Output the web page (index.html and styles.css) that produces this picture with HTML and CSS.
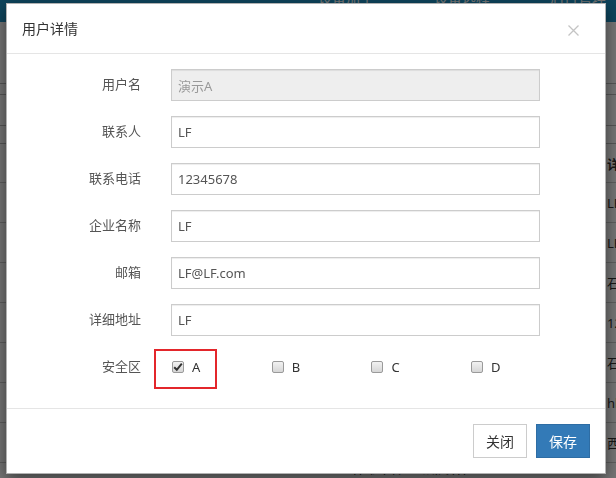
FILE: index.html
```html
<!DOCTYPE html>
<html lang="zh-CN">
<head>
<meta charset="utf-8">
<title>用户详情</title>
<link rel="stylesheet" href="styles.css">
</head>
<body>
<div class="page">
  <div class="nav">
    <span class="nav-item">设备加工</span>
    <span class="nav-item">设备远程</span>
    <span class="nav-item">后台管理</span>
  </div>
  <div class="band b1"></div>
  <div class="band b2"></div>
  <div class="band b3"></div>
  <div class="band b4"></div>
  <div class="trow head"><span></span><span>详细地址</span></div>
  <div class="trow"><span></span><span>LF</span></div>
  <div class="trow"><span></span><span>LF</span></div>
  <div class="trow"><span></span><span>石家庄</span></div>
  <div class="trow"><span></span><span>123</span></div>
  <div class="trow"><span></span><span>石家庄</span></div>
  <div class="trow"><span></span><span>hh</span></div>
  <div class="trow"><span></span><span>西安</span></div>
  <div class="trow foot"><span class="foottext">技术支持：联发科技</span><span></span></div>
</div>

<div class="backdrop"></div>

<div class="modal">
  <div class="modal-header">
    <h4 class="modal-title">用户详情</h4>
    <span class="close">
      <svg width="11" height="11" viewBox="0 0 11 11"><path d="M0.5 0.5 L10.5 10.5 M10.5 0.5 L0.5 10.5" stroke="#c4c4c4" stroke-width="1.3" fill="none"/></svg>
    </span>
  </div>
  <div class="modal-body">
    <div class="group">
      <label class="lbl">用户名</label>
      <div class="field disabled">演示A</div>
    </div>
    <div class="group">
      <label class="lbl">联系人</label>
      <div class="field">LF</div>
    </div>
    <div class="group">
      <label class="lbl">联系电话</label>
      <div class="field">12345678</div>
    </div>
    <div class="group">
      <label class="lbl">企业名称</label>
      <div class="field">LF</div>
    </div>
    <div class="group">
      <label class="lbl">邮箱</label>
      <div class="field">LF@LF.com</div>
    </div>
    <div class="group">
      <label class="lbl">详细地址</label>
      <div class="field">LF</div>
    </div>
    <div class="group">
      <label class="lbl">安全区</label>
      <div class="options">
        <div class="opt hl">
          <span class="cb checked"><svg width="10" height="10" viewBox="0 0 10 10"><path d="M1.2 5.2 L3.8 7.8 L8.8 1.6" stroke="#333" stroke-width="2" fill="none"/></svg></span>
          <span class="opt-text">A</span>
        </div>
        <div class="opt"><span class="cb"></span><span class="opt-text">B</span></div>
        <div class="opt"><span class="cb"></span><span class="opt-text">C</span></div>
        <div class="opt"><span class="cb"></span><span class="opt-text">D</span></div>
      </div>
    </div>
  </div>
  <div class="modal-footer">
    <button class="btn btn-default">关闭</button>
    <button class="btn btn-primary">保存</button>
  </div>
</div>
</body>
</html>
```
FILE: styles.css
```css
* { box-sizing: border-box; }
html, body { margin: 0; padding: 0; }
body {
  width: 616px;
  height: 478px;
  overflow: hidden;
  background: #fff;
  font-family: "Noto Sans", "Noto Sans CJK SC", sans-serif;
  color: #333;
}

/* ---------- page behind the modal ---------- */
.page { width: 616px; height: 478px; overflow: hidden; }
.nav {
  height: 22px;
  background: #1f95c8;
  display: flex;
  justify-content: flex-end;
  gap: 60px;
  padding-right: 10px;
  overflow: hidden;
}
.nav-item {
  color: #fff;
  font-size: 14px;
  line-height: 14px;
  margin-top: -9px;
}
.band { border-bottom: 1px solid #bbb; }
.b1 { height: 62px; }
.b2 { height: 11px; }
.b3 { height: 31px; }
.b4 { height: 18px; }
.trow {
  display: grid;
  grid-template-columns: 601px 1fr;
  height: 40px;
  border-bottom: 1px solid #ccc;
  font-size: 13px;
  align-items: center;
  color: #333;
}
.trow span:last-child { padding-left: 6px; white-space: nowrap; overflow: hidden; }
.trow.head { font-weight: bold; height: 39px; }
.trow.foot { align-items: start; border-bottom: none; height: 12px; overflow: hidden; }
.foottext { padding: 9px 0 0 352px; font-size: 13px; line-height: 16px; }

.backdrop {
  position: fixed;
  inset: 0;
  background: rgba(0, 0, 0, 0.54);
}

/* ---------- modal ---------- */
.modal {
  position: fixed;
  top: 3px;
  left: 6px;
  width: 600px;
  background: #fff;
  border: 1px solid rgba(0, 0, 0, 0.3);
  box-shadow: 0 5px 15px rgba(0, 0, 0, 0.5);
}
.modal-header {
  padding: 15px 26px 15px 15px;
  border-bottom: 1px solid #e5e5e5;
  display: flex;
  align-items: center;
  justify-content: space-between;
}
.modal-title {
  margin: 0;
  font-size: 14px;
  line-height: 19px;
  font-weight: normal;
  color: #333;
}
.close { display: flex; margin-top: 3px; }

.modal-body { padding: 15px 15px 10px; }
.group {
  display: grid;
  grid-template-columns: 119px 369px;
  column-gap: 30px;
  align-items: center;
  height: 32px;
  margin-bottom: 15px;
}
.lbl {
  text-align: right;
  font-size: 13px;
  line-height: 16px;
  margin-top: -2px;
  color: #555;
}
.field {
  height: 32px;
  border: 1px solid #ccc;
  box-shadow: inset 0 1px 1px rgba(0, 0, 0, 0.075);
  padding: 0 6px;
  display: flex;
  align-items: center;
  font-size: 13px;
  color: #555;
  background: #fff;
}
.field.disabled { background: #eee; color: #999; }

.options {
  display: grid;
  grid-template-columns: repeat(4, 99.7px);
  height: 32px;
}
.opt {
  display: flex;
  align-items: center;
  gap: 8px;
  padding-left: 1px;
}
.opt.hl { position: relative; }
.opt.hl::after {
  content: "";
  position: absolute;
  left: -17px;
  top: -2px;
  width: 59px;
  height: 36px;
  border: 2px solid #e3262b;
}
.cb {
  width: 12px;
  height: 12px;
  border: 1px solid #9a9a9a;
  border-radius: 2px;
  background: linear-gradient(#f2f2f2, #d6d6d6);
  display: flex;
  align-items: center;
  justify-content: center;
}
.opt-text { font-size: 13px; color: #333; }

.modal-footer {
  border-top: 1px solid #e5e5e5;
  padding: 15px;
  display: flex;
  justify-content: flex-end;
  gap: 9px;
}
.btn {
  height: 34px;
  width: 54px;
  padding: 0;
  font-family: "Noto Sans CJK SC", sans-serif;
  font-size: 14px;
  border: 1px solid #ccc;
  background: #fff;
  color: #333;
  border-radius: 0;
}
.btn-primary {
  background: #337ab7;
  border-color: #2e6da4;
  color: #fff;
}
```
